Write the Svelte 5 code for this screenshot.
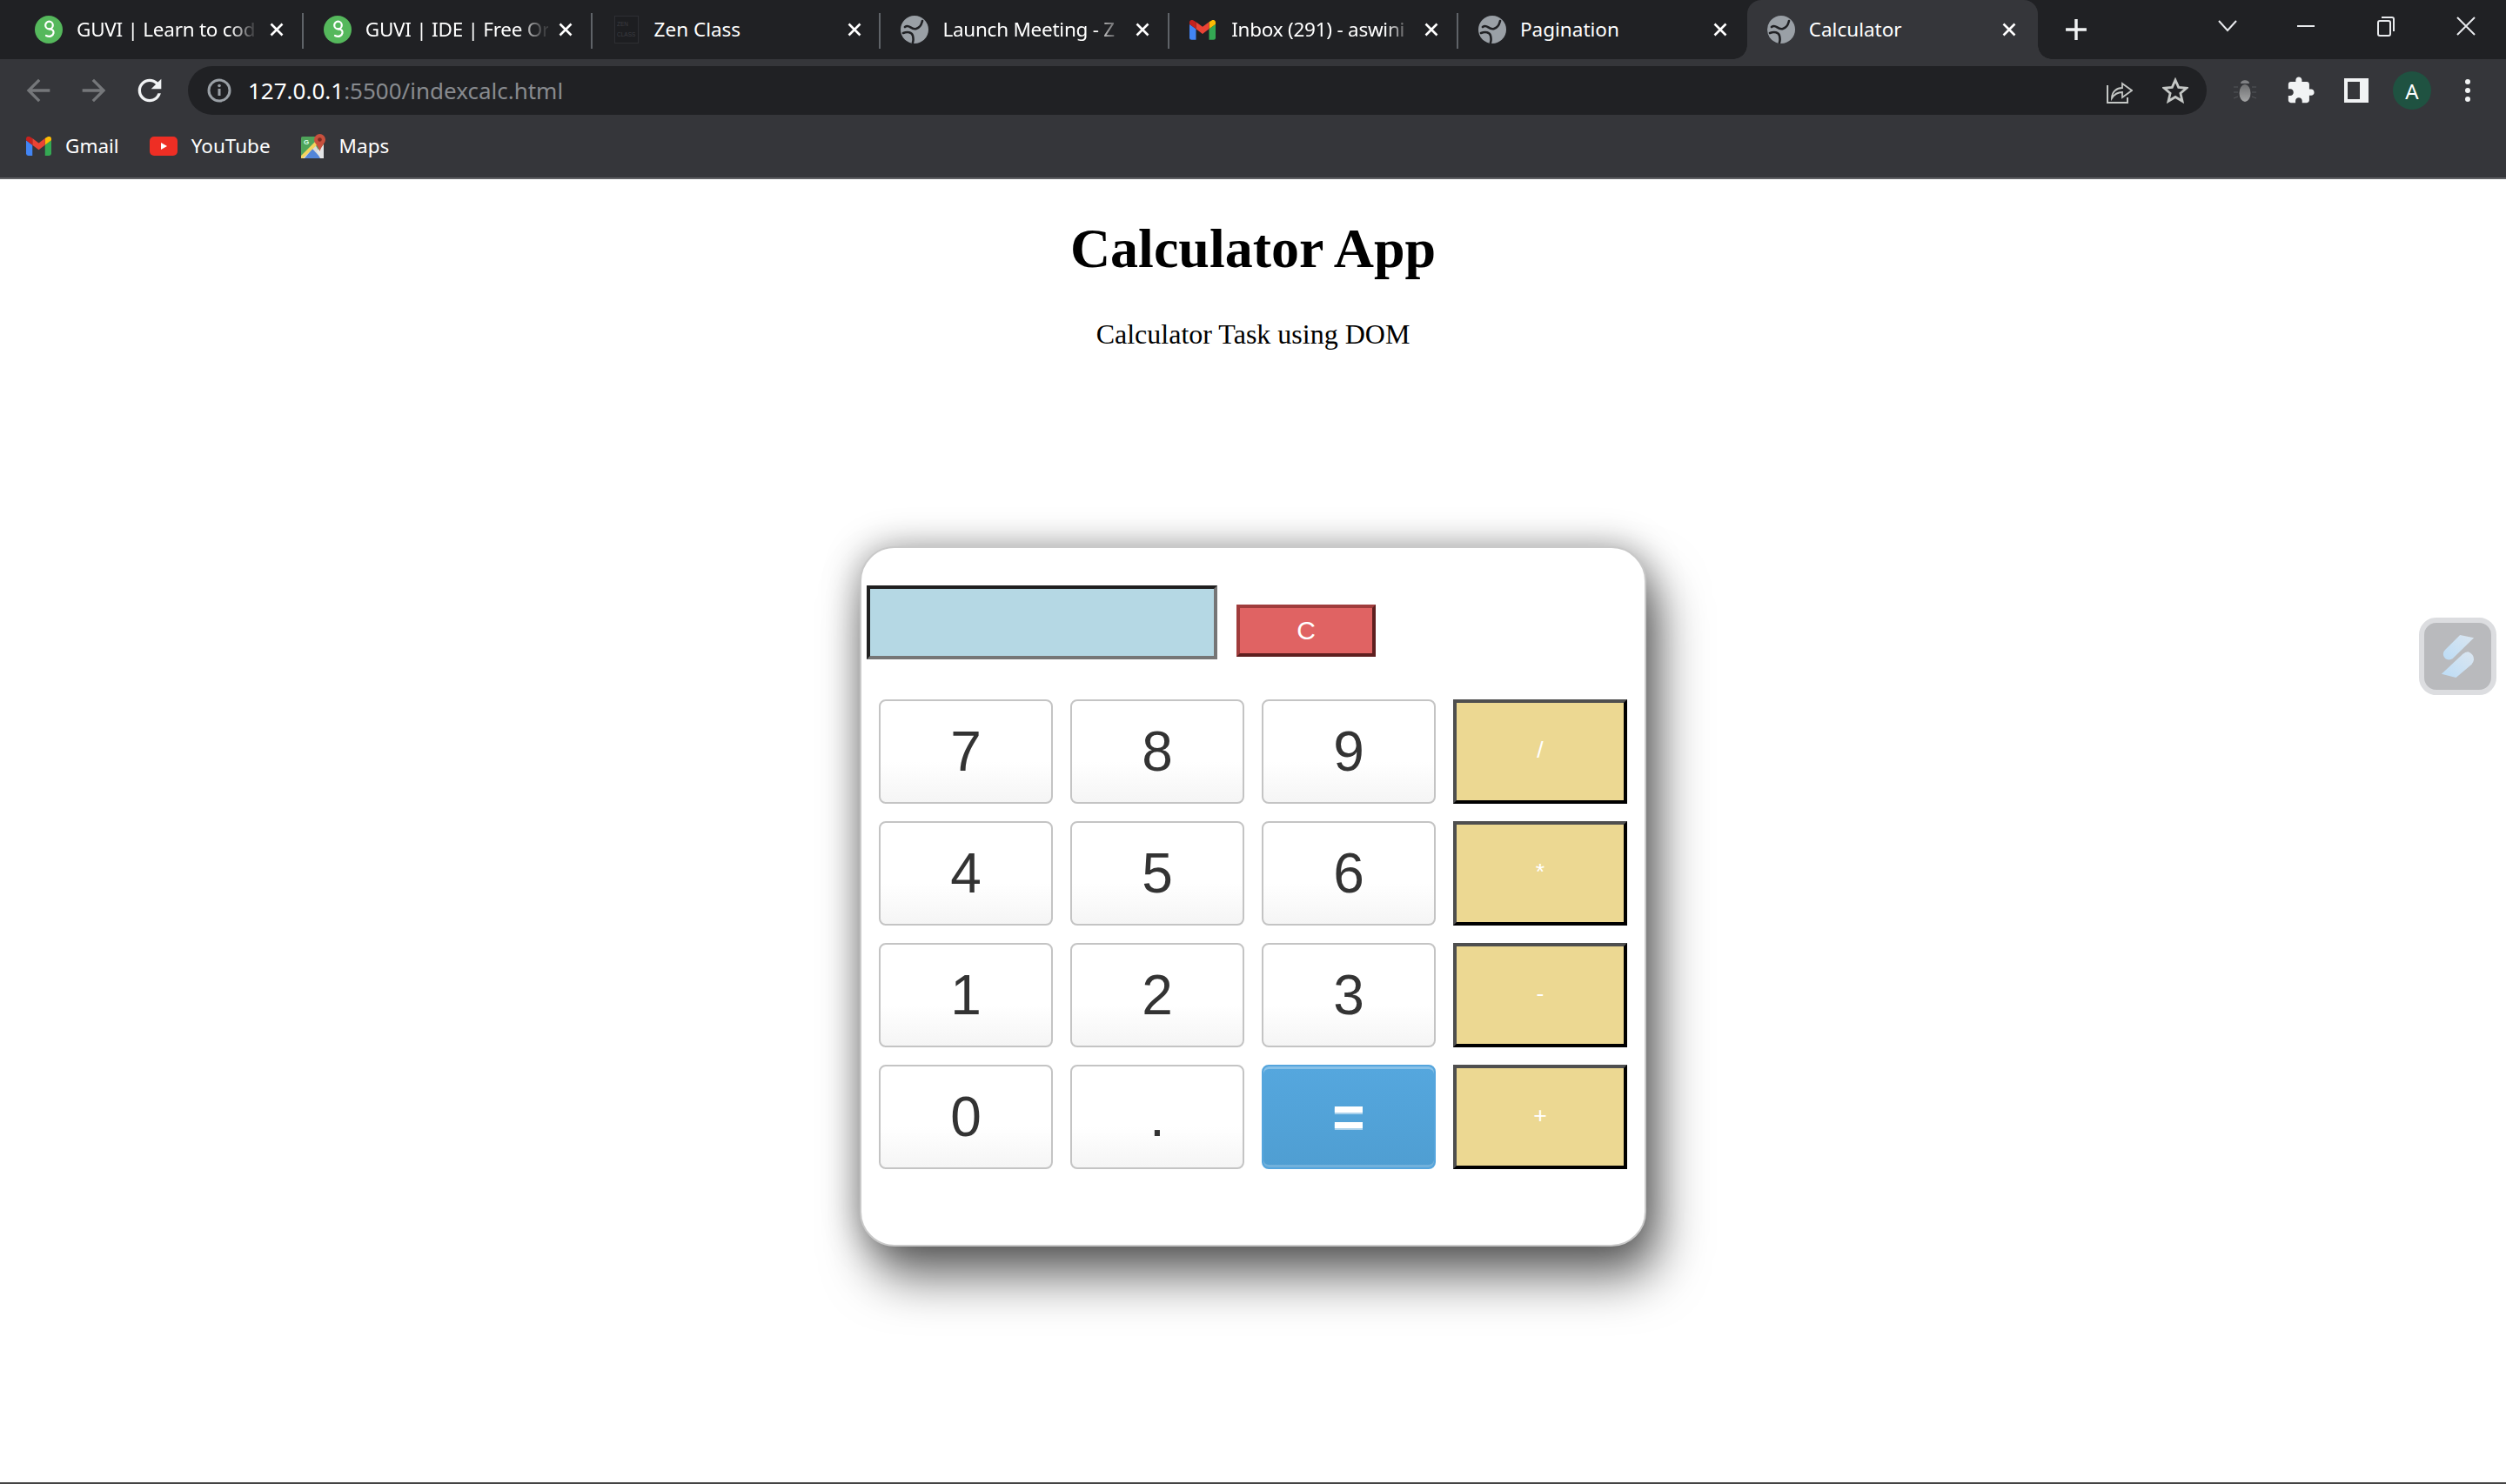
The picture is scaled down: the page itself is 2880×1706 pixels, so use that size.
<script>
  const tabs = [
    { title: 'GUVI | Learn to cod', icon: 'guvi', fade: true },
    { title: 'GUVI | IDE | Free Or', icon: 'guvi', fade: true },
    { title: 'Zen Class', icon: 'zen' },
    { title: 'Launch Meeting - Z', icon: 'globe', fade: true },
    { title: 'Inbox (291) - aswini', icon: 'gmail', fade: true },
    { title: 'Pagination', icon: 'globe', last: true },
    { title: 'Calculator', icon: 'globe', active: true }
  ];

  const keys = ['7', '8', '9', '/', '4', '5', '6', '*', '1', '2', '3', '-', '0', '.', '=', '+'];
  const ops = '/*-+';

  let expression = $state('');

  function press(key) {
    if (key === '=') {
      try {
        expression = String(Function('return ' + expression)());
      } catch {
        expression = 'Error';
      }
    } else {
      expression += key;
    }
  }
</script>

{#snippet gmail()}
  <svg class="gmail" viewBox="0 0 24 18">
    <path fill="#4285f4" d="M2 18h4V8L0 3.5V16a2 2 0 0 0 2 2z" />
    <path fill="#34a853" d="M18 18h4a2 2 0 0 0 2-2V3.5L18 8z" />
    <path fill="#fbbc04" d="M18 1.5V8l6-4.5V2c0-1.9-2.1-3-3.6-1.8z" />
    <path fill="#ea4335" d="M6 8V1.5l6 4.5 6-4.5V8l-6 4.5z" />
    <path fill="#c5221f" d="M0 2v1.5L6 8V1.5L3.6.2C2.1-1 0 .1 0 2z" />
  </svg>
{/snippet}

{#snippet favicon(icon)}
  {#if icon === 'guvi'}
    <svg class="fav" viewBox="0 0 32 32">
      <circle cx="16" cy="16" r="16" fill="#55b85c" />
      <g fill="none" stroke="#fff" stroke-width="2.2" stroke-linecap="round">
        <circle cx="16.5" cy="11" r="4.300" />
        <path d="M16.500 15.300c4 0 5.500 2.200 5 4.700-.6 3-4 5-8.500 3" />
      </g>
    </svg>
  {:else if icon === 'globe'}
    <svg class="fav" viewBox="0 0 32 32">
      <circle cx="16" cy="16" r="16" fill="#9aa0a6" />
      <path fill="none" stroke="#202124" stroke-width="2.600" stroke-linecap="round" d="M5 13c5-4 7 4 13 2s6-6 7-9M3 20c5-2 10-1 11 3s1 5 0 8" />
    </svg>
  {:else if icon === 'zen'}
    <svg class="fav zen" viewBox="0 0 28 32">
      <rect x=".5" y=".5" width="27" height="31" fill="#1d1e21" stroke="#2e2f33" />
      <text x="3" y="12" class="zen-text">ZEN</text>
      <text x="3" y="24" class="zen-text">CLASS</text>
    </svg>
  {:else}
    <span class="fav fav-gmail">{@render gmail()}</span>
  {/if}
{/snippet}

<div class="window">
  <header class="tabstrip">
    {#each tabs as tab}
      <div class="tab" class:active={tab.active} class:sep={!tab.last && !tab.active}>
        {@render favicon(tab.icon)}
        <span class="title" class:fade={tab.fade}>{tab.title}</span>
        <svg class="close" viewBox="0 0 16 16">
          <path d="M1.500 1.500l13 13M14.500 1.500l-13 13" stroke="#fff" stroke-width="2.600" />
        </svg>
      </div>
    {/each}
    <svg class="newtab" viewBox="0 0 24 24">
      <path d="M12 1v22M1 12h22" stroke="#f1f3f4" stroke-width="3.200" />
    </svg>
    <div class="winctl">
      <span class="ctl chevron">
        <svg width="22" height="14" viewBox="0 0 22 14"><path d="M1 1l10 11L21 1" fill="none" stroke="#e8eaed" stroke-width="2" /></svg>
      </span>
      <span class="ctl">
        <svg width="22" height="4" viewBox="0 0 22 4"><path d="M1 2h20" stroke="#e8eaed" stroke-width="2" /></svg>
      </span>
      <span class="ctl">
        <svg width="22" height="24" viewBox="0 0 22 24" fill="none" stroke="#e8eaed" stroke-width="2"><rect x="2" y="6" width="14" height="17" rx="2" /><path d="M6 2h12a2 2 0 0 1 2 2v14" /></svg>
      </span>
      <span class="ctl">
        <svg width="22" height="22" viewBox="0 0 22 22"><path d="M1 1l20 20M21 1L1 21" stroke="#e8eaed" stroke-width="2" /></svg>
      </span>
    </div>
  </header>

  <div class="toolbar">
    <span class="nav">
      <svg width="40" height="40" viewBox="0 0 24 24" fill="#75777a"><path d="M20 11H7.830l5.590-5.590L12 4l-8 8 8 8 1.410-1.410L7.830 13H20v-2z" /></svg>
    </span>
    <span class="nav">
      <svg width="40" height="40" viewBox="0 0 24 24" fill="#75777a"><path d="M4 11h12.170l-5.590-5.590L12 4l8 8-8 8-1.410-1.410L16.170 13H4v-2z" /></svg>
    </span>
    <span class="nav">
      <svg width="40" height="40" viewBox="0 0 24 24" fill="#f1f3f4"><path d="M17.650 6.350A7.958 7.958 0 0 0 12 4c-4.420 0-7.990 3.580-7.990 8s3.570 8 7.990 8c3.730 0 6.840-2.550 7.730-6h-2.080A5.990 5.990 0 0 1 12 18c-3.310 0-6-2.690-6-6s2.690-6 6-6c1.660 0 3.140.69 4.220 1.780L13 11h7V4l-2.350 2.350z" /></svg>
    </span>
    <div class="omnibox">
      <svg class="info" viewBox="0 0 28 28">
        <circle cx="14" cy="14" r="12" fill="none" stroke="#9aa0a6" stroke-width="3" />
        <path d="M14 12v8" stroke="#9aa0a6" stroke-width="3" />
        <circle cx="14" cy="8.500" r="1.800" fill="#9aa0a6" />
      </svg>
      <span class="url"><b>127.0.0.1</b>:5500/indexcalc.html</span>
      <svg class="share" viewBox="0 0 30 30" fill="none" stroke="#c4c7c5" stroke-width="2">
        <path d="M1 9v20h23v-6" />
        <path d="M6 24c0-8 6-12 12-12V7l11 8-11 8v-6c-5 0-9 2-12 7z" stroke-width="1.800" />
      </svg>
      <svg class="star" viewBox="0 0 30 30">
        <path d="M15 3l3.700 8.400 9.100.9-6.900 6 2.100 9-8-4.800-8 4.800 2.100-9-6.900-6 9.100-.9z" fill="none" stroke="#c4c7c5" stroke-width="2.800" />
      </svg>
    </div>
    <div class="actions">
      <span class="nav">
        <svg width="28" height="28" viewBox="0 0 28 28">
          <defs>
            <linearGradient id="bug" x1="0" y1="0" x2="0" y2="1"><stop offset="0" stop-color="#6e6f71" /><stop offset="1" stop-color="#a4a5a6" /></linearGradient>
          </defs>
          <path d="M9 6c0-5 10-5 10 0z" fill="#808184" />
          <ellipse cx="14" cy="17" rx="6.500" ry="10" fill="url(#bug)" />
          <path d="M1 10h5M22 10h5M1 16h5M22 16h5M1 23l5-2M22 21l5 2" stroke="#55565a" stroke-width="1" />
        </svg>
      </span>
      <span class="nav">
        <svg width="34" height="34" viewBox="0 0 24 24" fill="#f1f3f4"><path d="M20.500 11H19V7c0-1.100-.9-2-2-2h-4V3.500C13 2.120 11.880 1 10.500 1S8 2.120 8 3.500V5H4c-1.100 0-1.990.9-1.990 2v3.800H3.500c1.490 0 2.700 1.210 2.700 2.700s-1.210 2.700-2.700 2.700H2V20c0 1.100.9 2 2 2h3.800v-1.500c0-1.490 1.210-2.700 2.700-2.700 1.490 0 2.700 1.210 2.700 2.700V22H17c1.100 0 2-.9 2-2v-4h1.500c1.380 0 2.500-1.120 2.500-2.500S21.880 11 20.500 11z" /></svg>
      </span>
      <span class="nav"><span class="panel"></span></span>
      <span class="nav"><span class="avatar">A</span></span>
      <span class="nav">
        <svg width="6" height="26" viewBox="0 0 6 26" fill="#f1f3f4"><circle cx="3" cy="3" r="3" /><circle cx="3" cy="13" r="3" /><circle cx="3" cy="23" r="3" /></svg>
      </span>
    </div>
  </div>

  <nav class="bookmarks">
    <span class="mark"><span class="mark-gmail">{@render gmail()}</span><span class="mark-text">Gmail</span></span>
    <span class="mark">
      <svg class="yt" viewBox="0 0 32 22">
        <rect width="32" height="22" rx="5" fill="#ee2e24" />
        <path d="M13 7l7 4-7 4z" fill="#fff" />
      </svg>
      <span class="mark-text">YouTube</span>
    </span>
    <span class="mark">
      <svg class="maps" viewBox="0 0 28 28">
        <rect y="3" width="26" height="25" rx="1.500" fill="#4fa45a" />
        <path d="M0 26L16 12l10 16H0z" fill="#d9dadb" />
        <path d="M4 28l9-11 10 11z" fill="#5385d8" />
        <path d="M0 25L17 8l3 3L2 28H0z" fill="#f4d35e" />
        <path d="M18 20l4 8h4V12z" fill="#e4e5e6" />
        <text x="3" y="11.500" class="maps-g">G</text>
        <path d="M21.500 0a6.500 6.500 0 0 1 6.500 6.500c0 4-4.500 7-6.500 13.500C19.500 13.500 15 10.500 15 6.500A6.500 6.500 0 0 1 21.500 0z" fill="#c8503d" />
        <circle cx="21.500" cy="6.500" r="2.300" fill="#7c2a1f" />
      </svg>
      <span class="mark-text">Maps</span>
    </span>
  </nav>

  <main class="page">
    <h1>Calculator App</h1>
    <p>Calculator Task using DOM</p>

    <section class="calc">
      <div class="top">
        <input class="display" bind:value={expression} aria-label="Display" />
        <button class="clear" onclick={() => (expression = '')}>C</button>
      </div>
      <div class="keys">
        {#each keys as key}
          <button class="key" class:op={ops.includes(key)} class:eq={key === '='} onclick={() => press(key)}>{key}</button>
        {/each}
      </div>
    </section>

    <div class="widget">
      <svg viewBox="138 78 232 232">
        <defs>
          <linearGradient id="sl" x1="0" y1="1" x2="1" y2="0"><stop offset="0" stop-color="#bcdcf6" /><stop offset="1" stop-color="#dbe6f0" /></linearGradient>
        </defs>
        <path fill="url(#sl)" d="M262 120l48 10-74 72q-21 10-30-7-6-13 6-25z" />
        <path fill="url(#sl)" d="M290 178q20 7 20 27-2 13-12 21l-50 42-50-13 74-69q8-8 18-8z" />
      </svg>
    </div>
  </main>
</div>

<style>
  :global(body) {
    margin: 0;
  }

  .window {
    width: 2880px;
    height: 1706px;
    display: flex;
    flex-direction: column;
    overflow: hidden;
    background: #fff;
    border-bottom: 2px solid #444;
    box-sizing: border-box;
  }

  .tabstrip {
    height: 68px;
    flex: none;
    display: flex;
    padding-left: 17px;
    background: #202124;
    font-family: 'Noto Sans', sans-serif;
    color: #fff;
  }

  .tab {
    width: 331.8px;
    flex: none;
    display: flex;
    align-items: center;
    padding-left: 23px;
    box-sizing: border-box;
    position: relative;
  }

  .tab.sep::after {
    content: '';
    position: absolute;
    right: 0;
    top: 15px;
    height: 41px;
    width: 2px;
    background: #5f6368;
  }

  .tab.active {
    width: 334px;
    background: #35363a;
    border-radius: 16px 16px 0 0;
  }

  .tab.active::before,
  .tab.active::after {
    content: '';
    position: absolute;
    bottom: 0;
    width: 16px;
    height: 16px;
  }

  .tab.active::before {
    left: -16px;
    background: radial-gradient(circle at 0 0, #202124 15.500px, #35363a 16px);
  }

  .tab.active::after {
    right: -16px;
    background: radial-gradient(circle at 100% 0, #202124 15.500px, #35363a 16px);
  }

  .fav {
    width: 32px;
    height: 32px;
    flex: none;
  }

  .fav-gmail {
    display: flex;
    align-items: center;
  }

  .gmail {
    width: 30px;
    height: 23px;
    display: block;
  }

  .zen-text {
    font: 6.500px 'Liberation Sans', sans-serif;
    fill: #3c3d41;
  }

  .title {
    width: 210px;
    margin: -2px 0 0 16px;
    flex: none;
    font-size: 22.500px;
    white-space: nowrap;
  }

  .title.fade {
    letter-spacing: -0.25px;
    mask-image: linear-gradient(to right, #000 84%, rgba(0, 0, 0, 0.15) 97%);
  }

  .close {
    width: 16px;
    height: 16px;
    margin-left: 12px;
    flex: none;
  }

  .newtab {
    width: 26px;
    height: 26px;
    margin: 21px 0 0 31px;
  }

  .winctl {
    margin-left: auto;
    display: flex;
  }

  .ctl {
    width: 92px;
    height: 60px;
    display: flex;
    align-items: center;
    justify-content: center;
  }

  .ctl.chevron {
    width: 88px;
  }

  .toolbar {
    height: 72px;
    flex: none;
    display: flex;
    align-items: flex-start;
    padding: 8px 0 0 12px;
    box-sizing: border-box;
    background: #35363a;
  }

  .nav {
    width: 64px;
    height: 56px;
    flex: none;
    display: flex;
    align-items: center;
    justify-content: center;
  }

  .omnibox {
    width: 2320px;
    height: 56px;
    flex: none;
    margin-left: 12px;
    padding: 0 21px 0 22px;
    box-sizing: border-box;
    display: flex;
    align-items: center;
    background: #202124;
    border-radius: 28px;
  }

  .info {
    width: 28px;
    height: 28px;
    flex: none;
  }

  .url {
    margin-left: 19px;
    font: 26px 'Noto Sans', sans-serif;
    color: #888b8f;
  }

  .url b {
    font-weight: 400;
    color: #fff;
  }

  .share {
    width: 30px;
    height: 30px;
    margin-left: auto;
  }

  .star {
    width: 30px;
    height: 30px;
    margin-left: 34px;
  }

  .actions {
    display: flex;
    margin-left: 12px;
  }

  .panel {
    width: 28px;
    height: 28px;
    box-sizing: border-box;
    border: 4px solid #f1f3f4;
    border-right-width: 10px;
  }

  .avatar {
    width: 44px;
    height: 44px;
    border-radius: 50%;
    background: #1f5241;
    color: #fff;
    font: 24px 'Noto Sans', sans-serif;
    display: flex;
    align-items: center;
    justify-content: center;
  }

  .bookmarks {
    height: 66px;
    flex: none;
    display: flex;
    gap: 35px;
    padding: 0 0 9px 30px;
    box-sizing: border-box;
    background: #35363a;
    border-bottom: 2px solid #5f6063;
    color: #fff;
    font: 22.500px 'Noto Sans', sans-serif;
  }

  .mark {
    display: flex;
    align-items: center;
    gap: 16px;
  }

  .mark-text {
    margin-top: -1px;
  }

  .mark-gmail .gmail {
    width: 29px;
    height: 22px;
  }

  .yt {
    width: 32px;
    height: 22px;
  }

  .maps {
    width: 28px;
    height: 28px;
  }

  .maps-g {
    font: bold 8px 'Liberation Sans', sans-serif;
    fill: #dfe;
  }

  .page {
    flex: 1;
    position: relative;
    font-family: 'Liberation Serif', serif;
    color: #000;
    text-align: center;
  }

  h1 {
    margin: 43px 0 0;
    font-size: 64px;
    font-weight: 700;
    line-height: 74px;
  }

  p {
    margin: 43px 0 0;
    font-size: 32px;
    line-height: 37px;
  }

  .calc {
    width: 904px;
    margin: 225px auto 0;
    padding: 43px 0 87px;
    box-sizing: border-box;
    border: 2px solid #c9c9c9;
    border-radius: 40px;
    background: #fff;
    box-shadow: 0 0 40px rgba(0, 0, 0, 0.35), 14px 36px 56px rgba(0, 0, 0, 0.56);
  }

  .top {
    display: flex;
    gap: 22px;
    padding-left: 6px;
  }

  .display {
    width: 403px;
    height: 85px;
    box-sizing: border-box;
    padding: 0;
    background: #b5d8e4;
    border: 4px solid;
    border-color: #1f1f1f #767676 #767676 #1f1f1f;
    border-radius: 0;
    outline: none;
  }

  .clear {
    width: 160px;
    height: 60px;
    margin-top: 22px;
    padding: 0;
    background: #e06363;
    border: 4px solid;
    border-color: #a03c3c #5e1f1f #5e1f1f #a03c3c;
    color: #fff;
    font: 30px 'Liberation Sans', sans-serif;
  }

  .keys {
    display: grid;
    grid-template-columns: repeat(4, 200px);
    grid-auto-rows: 120px;
    gap: 20px;
    margin: 46px 0 0 20px;
  }

  .key {
    padding: 0;
    border: 2px solid #c4c4c4;
    border-radius: 8px;
    background: linear-gradient(#fff 60%, #f5f5f5);
    color: #333;
    font: 64px 'Liberation Sans', sans-serif;
  }

  .key.eq {
    border-color: #55a5dd;
    background: linear-gradient(#55a7de, #4f9ed2);
    box-shadow: inset 0 3px 0 rgba(255, 255, 255, 0.3), inset 0 -3px 0 rgba(255, 255, 255, 0.2);
    color: #fff;
    font-weight: 700;
    text-shadow: 0 2px 0 rgba(255, 255, 255, 0.5);
  }

  .key.op {
    padding-bottom: 3px;
    border: 4px solid;
    border-color: #4f4f4f #000 #000 #4f4f4f;
    border-radius: 0;
    background: #ecd892;
    color: #fff;
    font-size: 26.670px;
  }

  .widget {
    position: absolute;
    top: 504px;
    right: 11px;
    width: 89px;
    height: 89px;
    box-sizing: border-box;
    border: 6px solid #dcdde0;
    border-radius: 20px;
    background: #b9babd;
  }

  .widget svg {
    display: block;
    width: 77px;
    height: 77px;
  }
</style>
